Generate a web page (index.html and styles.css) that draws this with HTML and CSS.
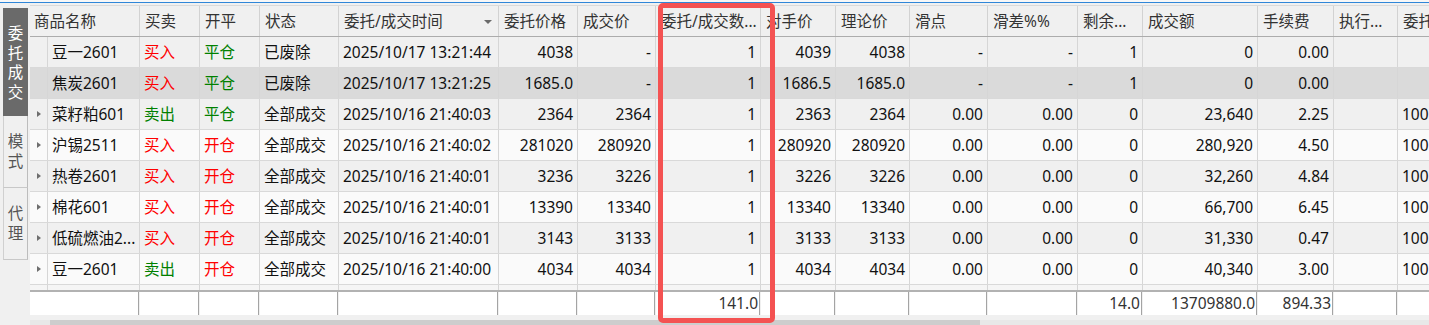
FILE: index.html
```html
<!DOCTYPE html>
<html lang="zh-CN">
<head>
<meta charset="utf-8">
<title>委托成交</title>
<link rel="stylesheet" href="styles.css">
</head>
<body>
<div class="topline"></div>
<div class="blueline"></div>
<div class="main">
  <div class="tabs">
    <div class="tab tab-active"><span class="vt">委托成交</span></div>
    <div class="tab tab-sm"><span class="vt">模式</span></div>
    <div class="tab tab-sm"><span class="vt">代理</span></div>
  </div>
  <div class="grid">
    <div class="head">
      <div class="h span2">商品名称</div>
      <div class="h">买卖</div>
      <div class="h">开平</div>
      <div class="h">状态</div>
      <div class="h sort">委托/成交时间<span class="sortarrow"></span></div>
      <div class="h">委托价格</div>
      <div class="h">成交价</div>
      <div class="h">委托/成交数...</div>
      <div class="h">对手价</div>
      <div class="h">理论价</div>
      <div class="h">滑点</div>
      <div class="h">滑差%%</div>
      <div class="h">剩余...</div>
      <div class="h">成交额</div>
      <div class="h">手续费</div>
      <div class="h">执行...</div>
      <div class="h">委托...</div>
    </div>

    <div class="row odd">
      <div class="c rh"></div>
      <div class="c">豆一2601</div>
      <div class="c buy">买入</div>
      <div class="c sell">平仓</div>
      <div class="c">已废除</div>
      <div class="c">2025/10/17 13:21:44</div>
      <div class="c r">4038</div>
      <div class="c r">-</div>
      <div class="c r">1</div>
      <div class="c r">4039</div>
      <div class="c r">4038</div>
      <div class="c r">-</div>
      <div class="c r">-</div>
      <div class="c r">1</div>
      <div class="c r">0</div>
      <div class="c r">0.00</div>
      <div class="c"></div>
      <div class="c"></div>
    </div>

    <div class="row sel">
      <div class="c rh"></div>
      <div class="c">焦炭2601</div>
      <div class="c buy">买入</div>
      <div class="c sell">平仓</div>
      <div class="c">已废除</div>
      <div class="c">2025/10/17 13:21:25</div>
      <div class="c r">1685.0</div>
      <div class="c r">-</div>
      <div class="c r">1</div>
      <div class="c r">1686.5</div>
      <div class="c r">1685.0</div>
      <div class="c r">-</div>
      <div class="c r">-</div>
      <div class="c r">1</div>
      <div class="c r">0</div>
      <div class="c r">0.00</div>
      <div class="c"></div>
      <div class="c"></div>
    </div>

    <div class="row odd">
      <div class="c rh"><span class="caret"></span></div>
      <div class="c">菜籽粕601</div>
      <div class="c sell">卖出</div>
      <div class="c sell">平仓</div>
      <div class="c">全部成交</div>
      <div class="c">2025/10/16 21:40:03</div>
      <div class="c r">2364</div>
      <div class="c r">2364</div>
      <div class="c r">1</div>
      <div class="c r">2363</div>
      <div class="c r">2364</div>
      <div class="c r">0.00</div>
      <div class="c r">0.00</div>
      <div class="c r">0</div>
      <div class="c r">23,640</div>
      <div class="c r">2.25</div>
      <div class="c"></div>
      <div class="c">100</div>
    </div>

    <div class="row even">
      <div class="c rh"><span class="caret"></span></div>
      <div class="c">沪锡2511</div>
      <div class="c buy">买入</div>
      <div class="c buy">开仓</div>
      <div class="c">全部成交</div>
      <div class="c">2025/10/16 21:40:02</div>
      <div class="c r">281020</div>
      <div class="c r">280920</div>
      <div class="c r">1</div>
      <div class="c r">280920</div>
      <div class="c r">280920</div>
      <div class="c r">0.00</div>
      <div class="c r">0.00</div>
      <div class="c r">0</div>
      <div class="c r">280,920</div>
      <div class="c r">4.50</div>
      <div class="c"></div>
      <div class="c">100</div>
    </div>

    <div class="row odd">
      <div class="c rh"><span class="caret"></span></div>
      <div class="c">热卷2601</div>
      <div class="c buy">买入</div>
      <div class="c buy">开仓</div>
      <div class="c">全部成交</div>
      <div class="c">2025/10/16 21:40:01</div>
      <div class="c r">3236</div>
      <div class="c r">3226</div>
      <div class="c r">1</div>
      <div class="c r">3226</div>
      <div class="c r">3226</div>
      <div class="c r">0.00</div>
      <div class="c r">0.00</div>
      <div class="c r">0</div>
      <div class="c r">32,260</div>
      <div class="c r">4.84</div>
      <div class="c"></div>
      <div class="c">100</div>
    </div>

    <div class="row even">
      <div class="c rh"><span class="caret"></span></div>
      <div class="c">棉花601</div>
      <div class="c buy">买入</div>
      <div class="c buy">开仓</div>
      <div class="c">全部成交</div>
      <div class="c">2025/10/16 21:40:01</div>
      <div class="c r">13390</div>
      <div class="c r">13340</div>
      <div class="c r">1</div>
      <div class="c r">13340</div>
      <div class="c r">13340</div>
      <div class="c r">0.00</div>
      <div class="c r">0.00</div>
      <div class="c r">0</div>
      <div class="c r">66,700</div>
      <div class="c r">6.45</div>
      <div class="c"></div>
      <div class="c">100</div>
    </div>

    <div class="row odd">
      <div class="c rh"><span class="caret"></span></div>
      <div class="c">低硫燃油2...</div>
      <div class="c buy">买入</div>
      <div class="c buy">开仓</div>
      <div class="c">全部成交</div>
      <div class="c">2025/10/16 21:40:01</div>
      <div class="c r">3143</div>
      <div class="c r">3133</div>
      <div class="c r">1</div>
      <div class="c r">3133</div>
      <div class="c r">3133</div>
      <div class="c r">0.00</div>
      <div class="c r">0.00</div>
      <div class="c r">0</div>
      <div class="c r">31,330</div>
      <div class="c r">0.47</div>
      <div class="c"></div>
      <div class="c">100</div>
    </div>

    <div class="row even">
      <div class="c rh"><span class="caret"></span></div>
      <div class="c">豆一2601</div>
      <div class="c sell">卖出</div>
      <div class="c buy">开仓</div>
      <div class="c">全部成交</div>
      <div class="c">2025/10/16 21:40:00</div>
      <div class="c r">4034</div>
      <div class="c r">4034</div>
      <div class="c r">1</div>
      <div class="c r">4034</div>
      <div class="c r">4034</div>
      <div class="c r">0.00</div>
      <div class="c r">0.00</div>
      <div class="c r">0</div>
      <div class="c r">40,340</div>
      <div class="c r">3.00</div>
      <div class="c"></div>
      <div class="c">100</div>
    </div>

    <div class="row filler">
      <div class="c"></div><div class="c"></div><div class="c"></div><div class="c"></div>
      <div class="c"></div><div class="c"></div><div class="c"></div><div class="c"></div>
      <div class="c"></div><div class="c"></div><div class="c"></div><div class="c"></div>
      <div class="c"></div><div class="c"></div><div class="c"></div><div class="c"></div>
      <div class="c"></div><div class="c"></div>
    </div>

    <div class="foot">
      <div class="f span2"></div>
      <div class="f"></div>
      <div class="f"></div>
      <div class="f"></div>
      <div class="f"></div>
      <div class="f"></div>
      <div class="f"></div>
      <div class="f">141.0</div>
      <div class="f"></div>
      <div class="f"></div>
      <div class="f"></div>
      <div class="f"></div>
      <div class="f">14.0</div>
      <div class="f">13709880.0</div>
      <div class="f">894.33</div>
      <div class="f"></div>
      <div class="f"></div>
    </div>

    <div class="hscroll"><div class="thumb"></div></div>
  </div>
</div>
<div class="highlight"></div>
</body>
</html>
```

FILE: styles.css
```css
html, body {
  margin: 0;
  padding: 0;
}
body {
  width: 1429px;
  height: 325px;
  overflow: hidden;
  background: #f0f0f0;
  font-family: "Noto Sans", "Noto Sans CJK SC", sans-serif;
  font-size: 15.5px;
  color: #111;
  position: relative;
}
.topline {
  height: 2px;
  background: #f7f7f7;
}
.blueline {
  height: 1px;
  background: #2f86d8;
}
.main {
  display: flex;
  align-items: flex-start;
}
.tabs {
  width: 30px;
  flex: none;
  padding: 5px 2px 0 3px;
  box-sizing: border-box;
  font-family: "Noto Sans CJK SC", sans-serif;
}
.tab {
  width: 25px;
  box-sizing: border-box;
  display: flex;
  justify-content: center;
  padding-top: 15px;
  color: #555;
  border-left: 1px solid #d0d0d0;
  border-right: 1px solid #bcbcbc;
  border-bottom: 1px solid #c8c8c8;
}
.tab-active {
  height: 108px;
  background: #6a6a6a;
  color: #fff;
  border: none;
}
.tab-sm {
  height: 72px;
}
.vt {
  display: block;
  width: 1em;
  line-height: 19.5px;
  font-size: 15.5px;
}
.grid {
  flex: none;
  margin-top: 2px;
  width: 1520px;
}
.head, .row, .foot {
  display: grid;
  grid-template-columns: 18px 92px 60px 60px 79px 160px 79px 78px 105px 75px 74px 78px 90px 65px 115px 76px 64px 120px;
}
.head {
  height: 32px;
  box-sizing: border-box;
  border-top: 1px solid #dadada;
  border-bottom: 1px solid #acacac;
  background: #f0f0f0;
  color: #333;
}
.h {
  border-right: 1px solid #d2d2d2;
  padding: 0 5px;
  line-height: 30px;
  white-space: nowrap;
  overflow: hidden;
}
.span2 {
  grid-column: span 2;
  padding-left: 4px;
}
.sort {
  display: flex;
  justify-content: space-between;
  align-items: center;
}
.sortarrow {
  width: 0;
  height: 0;
  border-top: 4px solid #6a6a6a;
  border-left: 4px solid transparent;
  border-right: 4px solid transparent;
  margin-right: 1px;
  margin-top: 2px;
}
.row {
  height: 31px;
  box-sizing: border-box;
  border-bottom: 1px solid #d9d9d9;
}
.row.odd { background: #f0f0f0; }
.row.even { background: #fafafa; }
.row.sel { background: #dadada; }
.c {
  border-right: 1px solid #d6d6d6;
  padding: 0 4px;
  line-height: 30px;
  white-space: nowrap;
  overflow: hidden;
}
.c.r { text-align: right; }
.buy { color: #ff0000; }
.sell { color: #008000; }
.rh {
  display: flex;
  align-items: center;
  padding: 0 0 0 7px;
}
.caret {
  width: 0;
  height: 0;
  border-left: 4px solid #6e6e6e;
  border-top: 3.5px solid transparent;
  border-bottom: 3.5px solid transparent;
}
.row.filler {
  height: 5px;
  border-bottom: none;
  background: #f5f5f5;
}
.foot {
  height: 25px;
  box-sizing: border-box;
  border-top: 2px solid #b2b2b2;
  color: #333;
}
.f {
  background: linear-gradient(to left, #f0f0f0 0 1px, #a4a4a4 1px 2px, #ffffff 2px);
  text-align: right;
  padding-right: 3px;
  line-height: 23px;
  white-space: nowrap;
  overflow: hidden;
}
.hscroll {
  margin-top: 5px;
  height: 5px;
  background: #e8e8e8;
}
.thumb {
  margin-left: 20px;
  width: 930px;
  height: 5px;
  background: #cdcdcd;
}
.highlight {
  position: absolute;
  left: 658px;
  top: 3px;
  width: 117px;
  height: 320px;
  box-sizing: border-box;
  border: 5px solid #f45252;
  border-radius: 5px;
  pointer-events: none;
}
```
